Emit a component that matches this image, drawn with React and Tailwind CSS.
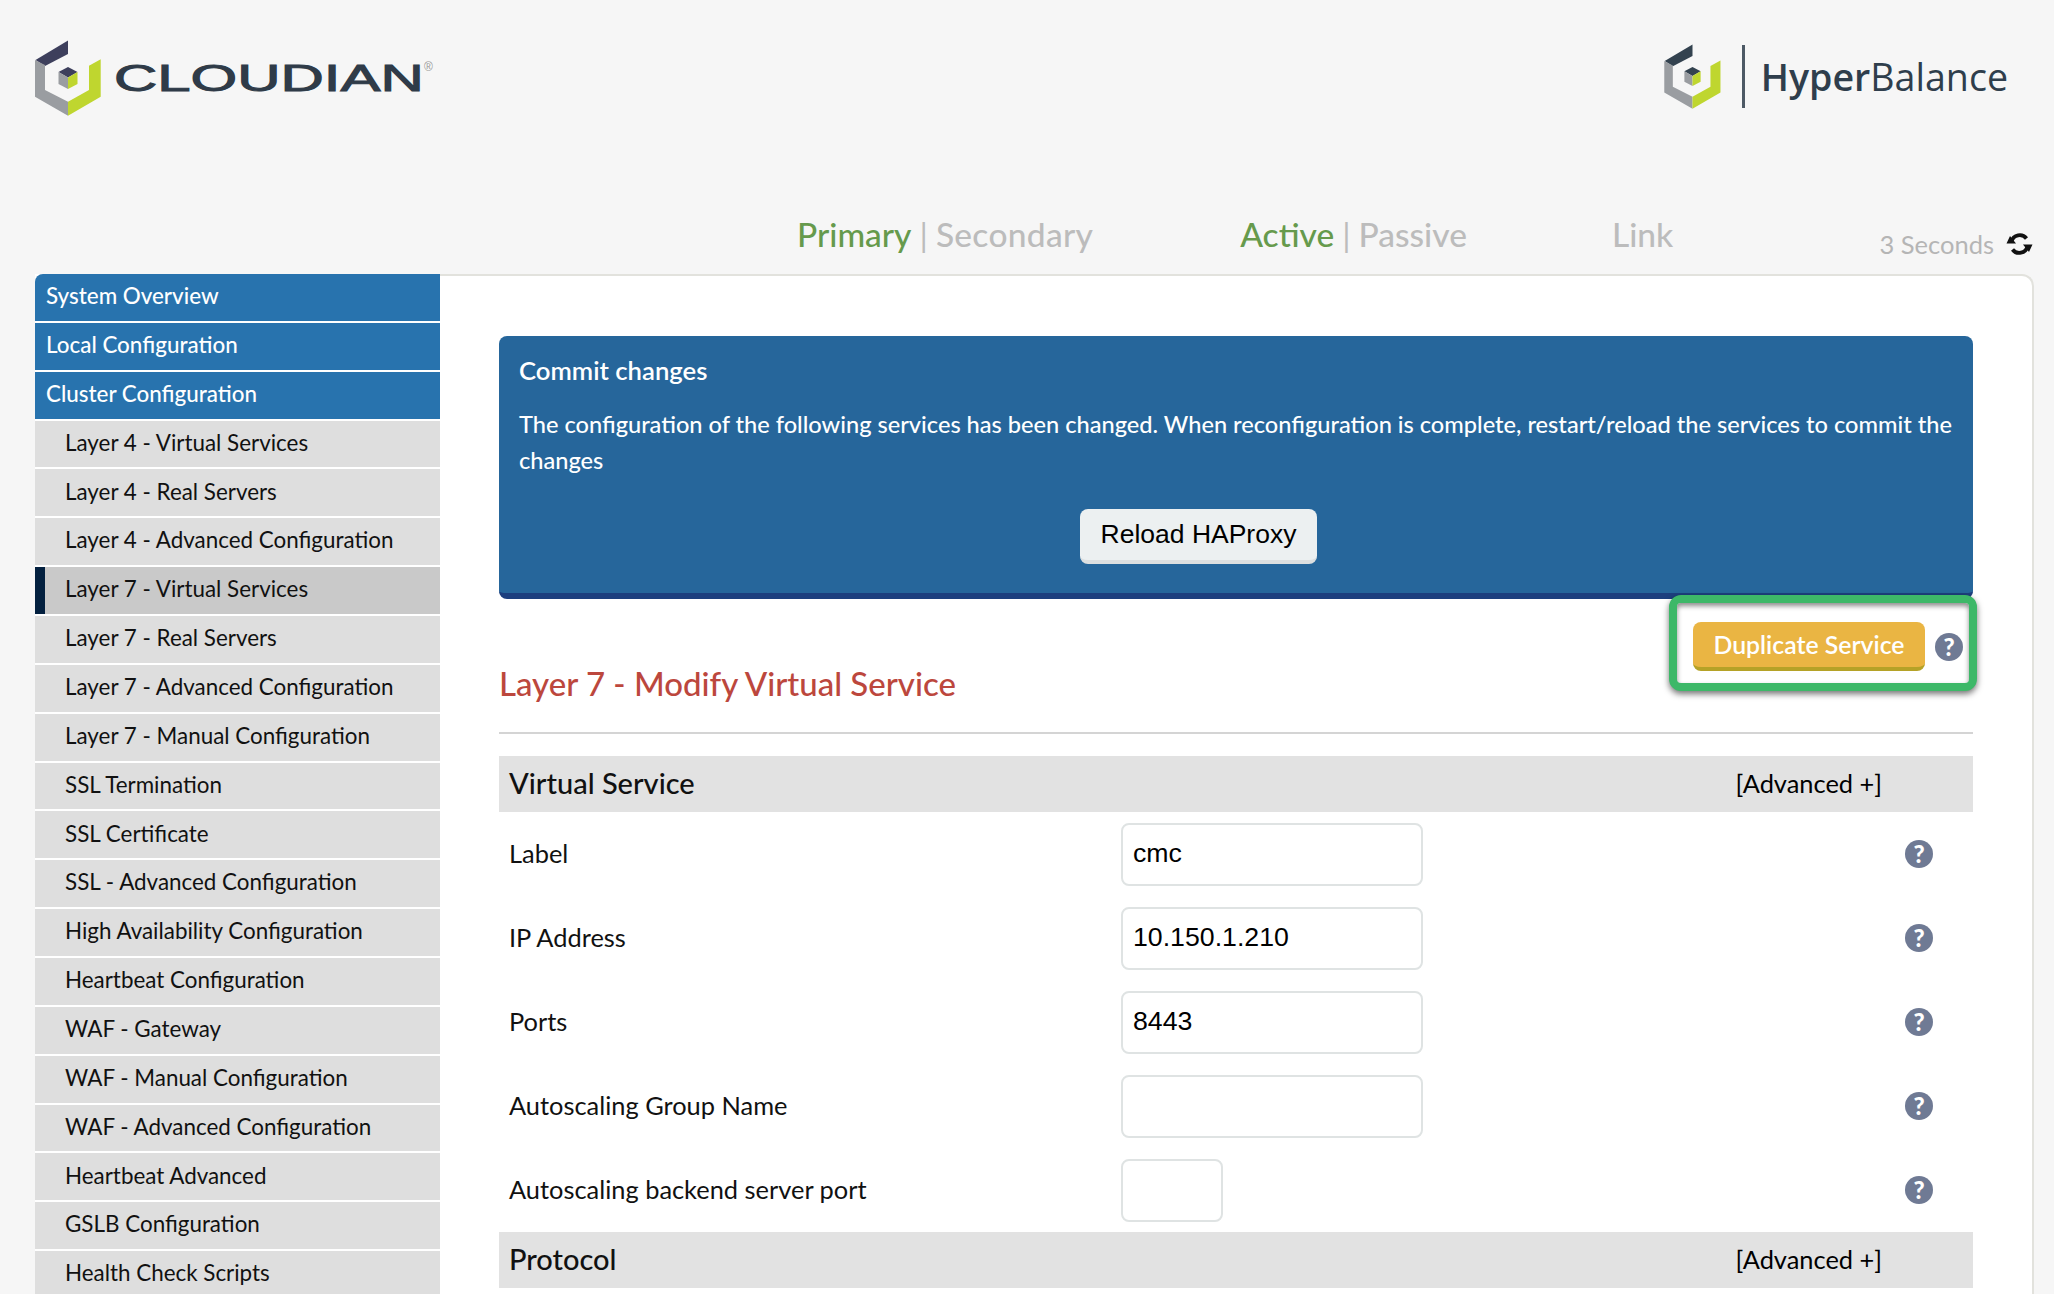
import React from 'react';

const topMenu = ['System Overview', 'Local Configuration', 'Cluster Configuration'];

const subMenu = [
  'Layer 4 - Virtual Services',
  'Layer 4 - Real Servers',
  'Layer 4 - Advanced Configuration',
  'Layer 7 - Virtual Services',
  'Layer 7 - Real Servers',
  'Layer 7 - Advanced Configuration',
  'Layer 7 - Manual Configuration',
  'SSL Termination',
  'SSL Certificate',
  'SSL - Advanced Configuration',
  'High Availability Configuration',
  'Heartbeat Configuration',
  'WAF - Gateway',
  'WAF - Manual Configuration',
  'WAF - Advanced Configuration',
  'Heartbeat Advanced',
  'GSLB Configuration',
  'Health Check Scripts',
];

const fields = [
  { label: 'Label', value: 'cmc' },
  { label: 'IP Address', value: '10.150.1.210' },
  { label: 'Ports', value: '8443' },
  { label: 'Autoscaling Group Name', value: '' },
  { label: 'Autoscaling backend server port', value: '', small: true },
];

function Cube({ className, dark }) {
  return (
    <svg viewBox="0 0 66 76" className={className}>
      <path d="M0.5 20 L33 0.5 V14 L10 26 Z" fill={dark} />
      <path d="M0 20 L10 25 V50 L33 61.7 V75.7 L0 56.7 Z" fill="#9a9da1" />
      <path d="M65.7 19.3 L54 25.7 V50 L33 61.7 V75.7 L65.7 56.7 Z" fill="#bfd62f" />
      <path d="M23.5 32 L33 27 L42.5 32 L33 37.5 Z" fill={dark} />
      <path d="M23.5 32 L33 37.5 V49 L23.5 44 Z" fill="#9a9da1" />
      <path d="M33 37.5 L42.5 32 V44 L33 49 Z" fill="#bfd62f" />
    </svg>
  );
}

// round refresh mark next to the timer
function RefreshIcon() {
  return (
    <svg viewBox="0 0 27 24" className="ml-[12px] mr-[1px] h-[24px] w-[27px]" fill="none">
      <path d="M5.5 9.5 A8.5 8.5 0 0 1 20.5 6.5" stroke="#111" strokeWidth="3.8" />
      <path d="M21.5 14.5 A8.5 8.5 0 0 1 6.5 17.5" stroke="#111" strokeWidth="3.8" />
      <path d="M0.5 11.5 H10 L4 4 Z" fill="#111" />
      <path d="M26.5 12.5 H17 L23 20 Z" fill="#111" />
    </svg>
  );
}

function HelpIcon() {
  return (
    <span className="flex h-[28px] w-[28px] shrink-0 items-center justify-center rounded-full bg-[#6f7a94] font-['Lato',sans-serif] text-[24px] font-black leading-none text-white">
      ?
    </span>
  );
}

function SectionBar({ title }) {
  return (
    <div className="flex h-[56px] shrink-0 items-center justify-between bg-[#e2e2e2] pb-[2px] pl-[10px] pr-[91px]">
      <span className="text-[29px] font-medium text-[#111]">{title}</span>
      <span className="text-[25.4px] text-black">[Advanced +]</span>
    </div>
  );
}

export default function App() {
  return (
    <div className="flex h-[1294px] flex-col overflow-hidden bg-[#f6f6f6] pl-[35px] pr-[20px] font-['Lato',sans-serif]">
      {/* logos */}
      <header className="flex h-[206px] shrink-0 items-start justify-between pt-[40px]">
        <div className="flex items-start">
          <Cube className="h-[76px] w-[66px]" dark="#3d3f5c" />
          <span className="ml-[13px] mt-[16px] inline-block w-[192px] origin-left scale-x-[1.62] font-['Liberation_Sans',sans-serif] text-[37px] font-normal leading-[46px] text-[#2f3b48] [-webkit-text-stroke:1px_#2f3b48]">
            CLOUDIAN
          </span>
          <span className="ml-[118px] mt-[21px] font-['Liberation_Sans',sans-serif] text-[12px] leading-none text-[#999]">®</span>
        </div>
        <div className="mr-[26px] mt-[4px] flex items-center">
          <Cube className="h-[65px] w-[59px]" dark="#33424f" />
          <div className="ml-[20px] h-[63px] w-[3px] bg-[#4d5965]" />
          <span className="ml-[16px] font-['Open_Sans',sans-serif] text-[37.6px] leading-none text-[#2f3e4c]">
            <span className="font-semibold">Hyper</span>
            <span className="font-normal">Balance</span>
          </span>
        </div>
      </header>

      {/* cluster status */}
      <div className="flex h-[68px] shrink-0 items-start pl-[762px] pt-[4px] text-[33.5px] font-medium leading-[48px] text-[#bcbcbc]">
        <span className="text-[#669a4c]">Primary</span>
        <span className="mx-[8px] font-normal">|</span>
        <span className="tracking-[0.3px]">Secondary</span>
        <span className="ml-[147px] text-[#669a4c]">Active</span>
        <span className="mx-[8px] font-normal">|</span>
        <span>Passive</span>
        <span className="ml-[145px]">Link</span>
        <span className="ml-auto mt-[14px] flex items-center text-[25.5px] font-normal leading-[40px] text-[#b5b5b5]">
          3 Seconds
          <RefreshIcon />
        </span>
      </div>

      <div className="flex min-h-0 flex-1 overflow-hidden">
        {/* side menu */}
        <nav className="w-[405px] shrink-0 bg-white">
          {topMenu.map((item, i) => (
            <div
              key={item}
              className={`mb-[2px] flex h-[46.87px] items-center bg-[#2873ae] pb-[3px] pl-[11px] text-[22.4px] font-medium text-white ${i === 0 ? 'rounded-tl-[8px]' : ''}`}
            >
              {item}
            </div>
          ))}
          {subMenu.map((item) => {
            const active = item === 'Layer 7 - Virtual Services';
            return (
              <div
                key={item}
                className={`mb-[2px] flex h-[46.87px] items-center pb-[3px] text-[22.4px] text-[#111] ${active ? 'border-l-[10px] border-[#03203f] bg-[#c9c9c9] pl-[20px]' : 'bg-[#dedede] pl-[30px]'}`}
              >
                {item}
              </div>
            );
          })}
        </nav>

        {/* main panel */}
        <main className="flex min-w-0 flex-1 flex-col rounded-tr-[12px] border-r-2 border-t-2 border-[#e2e2dd] bg-white pl-[59px] pr-[59px] pt-[60px]">
          <section className="h-[263px] shrink-0 rounded-[8px] border-b-[6px] border-[#1d3f7e] bg-[#26669b] px-[20px] pt-[15px] text-white">
            <h2 className="text-[25.7px] font-semibold leading-[38px]">Commit changes</h2>
            <p className="mt-[17px] text-[23.6px] font-medium leading-[36px]">
              The configuration of the following services has been changed. When reconfiguration is complete, restart/reload the services to commit the changes
            </p>
            <div className="mt-[31px] flex pl-[561px]">
              <button className="h-[55px] w-[237px] rounded-[8px] border-b-4 border-[#dcdfe0] bg-[#ecf0f1] font-['Liberation_Sans',sans-serif] text-[26.5px] text-black">
                Reload HAProxy
              </button>
            </div>
          </section>

          <div className="relative z-10 -mt-[4px] flex h-[137px] shrink-0 items-start justify-between">
            <h1 className="mt-[66px] text-[33px] font-medium leading-[44px] text-[#bc473d]">Layer 7 - Modify Virtual Service</h1>
            <div className="-mr-[4px] flex h-[96px] w-[308px] items-center rounded-[12px] border-[8px] border-[#3db868] bg-white pl-[16px] pt-[7px] shadow-[0_3px_6px_rgba(0,0,0,0.55),inset_0_3px_5px_rgba(0,0,0,0.45)]">
              <button className="h-[49px] w-[232px] rounded-[8px] border-b-4 border-[#b5a227] bg-[#eab543] pt-[1px] text-[24.8px] font-semibold text-white">
                Duplicate Service
              </button>
              <span className="ml-[10px]">
                <HelpIcon />
              </span>
            </div>
          </div>

          <div className="h-[2px] shrink-0 bg-[#d4d4d4]" />
          <div className="h-[22px] shrink-0" />

          <SectionBar title="Virtual Service" />
          {fields.map((field) => (
            <div key={field.label} className="flex h-[84px] shrink-0 items-center pl-[10px] pr-[40px] text-[25.4px] text-[#111]">
              <label className="w-[612px] shrink-0 pb-[1px]">{field.label}</label>
              <input
                readOnly
                value={field.value}
                className={`h-[63px] rounded-[8px] border-2 border-[#dfe3e3] bg-white pb-[2px] pl-[10px] font-['Liberation_Sans',sans-serif] text-[26.7px] text-black outline-none ${field.small ? 'w-[102px]' : 'w-[302px]'}`}
              />
              <span className="ml-auto">
                <HelpIcon />
              </span>
            </div>
          ))}
          <SectionBar title="Protocol" />
        </main>
      </div>
    </div>
  );
}
